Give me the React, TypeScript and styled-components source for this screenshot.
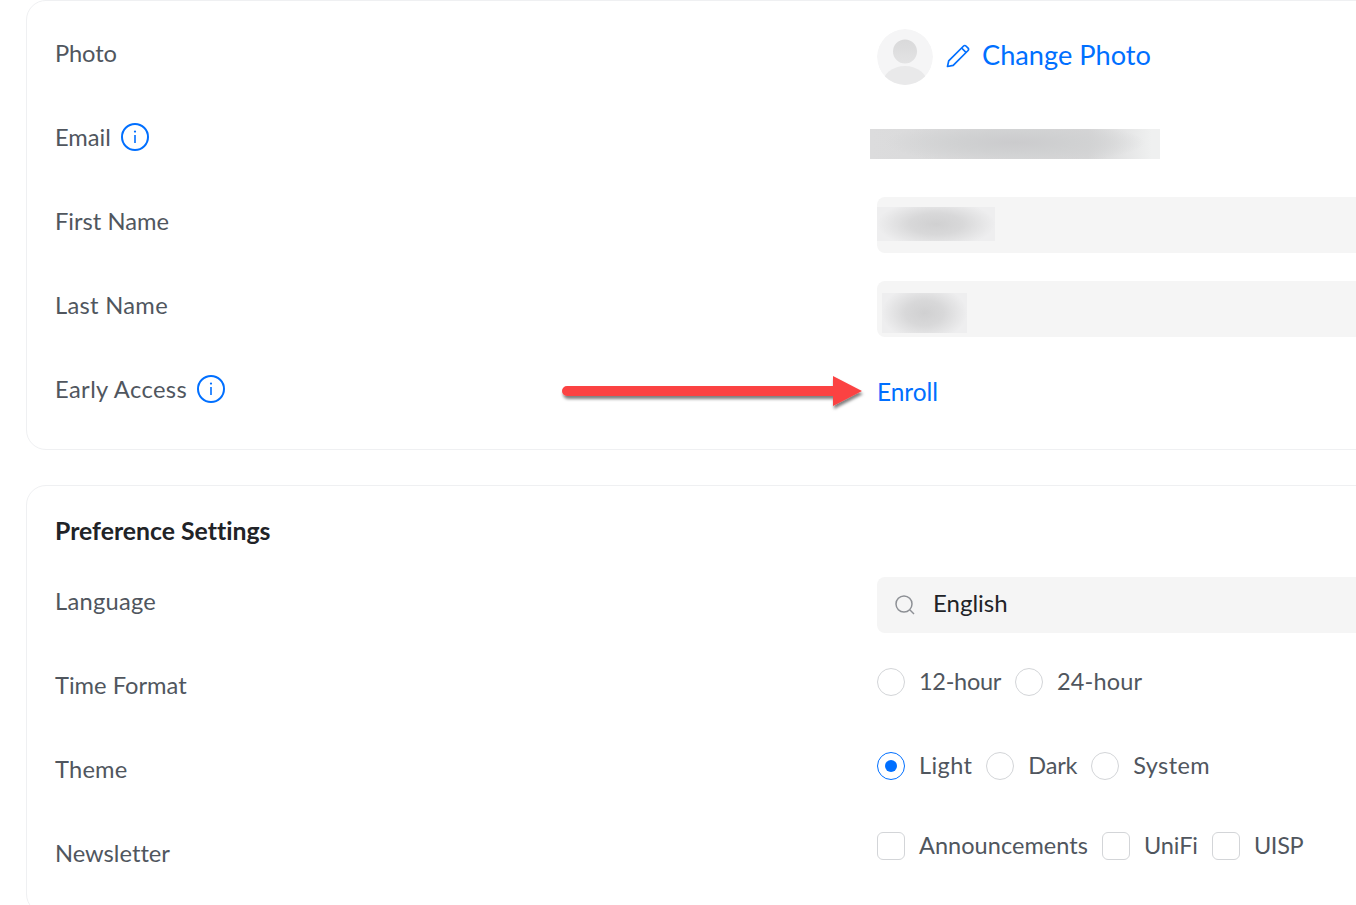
import React from "react";
import styled, { createGlobalStyle } from "styled-components";

const Global = createGlobalStyle`
  html, body { margin: 0; padding: 0; background: #fff; overflow: hidden; height: 905px; }
  * { box-sizing: border-box; }
`;

const Page = styled.div`
  position: relative;
  width: 1356px;
  height: 905px;
  overflow: hidden;
  padding-left: 26px;
  font-family: "Lato", "Liberation Sans", sans-serif;
  font-size: 23.7px;
  font-variant-ligatures: none;
  color: #50565e;
`;

const Card = styled.section<{ $second?: boolean }>`
  width: 1500px;
  border: 1px solid #eff0f2;
  border-radius: 20px;
  padding: 28px;
  margin-top: ${(p) => (p.$second ? "35px" : "0")};
  display: flex;
  flex-direction: column;
  gap: 28px;
`;

const Title = styled.h2`
  margin: 0;
  height: 35px;
  line-height: 33px;
  font-size: 24.8px;
  font-weight: 700;
  color: #212327;
`;

const Row = styled.div`
  display: grid;
  grid-template-columns: 822px 1fr;
  height: 56px;
`;

const Label = styled.div`
  display: flex;
  align-items: center;
  gap: 10px;
  height: 48px;
  line-height: 48px;
`;

const LabelText = styled.span<{ $track?: number }>`
  letter-spacing: ${(p) => p.$track ?? 0}px;
`;

const Control = styled.div`
  display: flex;
  align-items: flex-start;
  position: relative;
`;

const Avatar = styled.div`
  width: 56px;
  height: 56px;
  border-radius: 50%;
  overflow: hidden;
  flex: none;
`;

const LinkText = styled.span`
  color: #006fff;
  font-size: 27.2px;
  line-height: 34px;
`;

const PhotoLink = styled.div`
  display: flex;
  align-items: center;
  height: 52px;
  gap: 11px;
  margin-left: 13px;
`;

const EnrollLink = styled.div`
  color: #006fff;
  font-size: 24.4px;
  height: 54px;
  line-height: 54px;
`;

const Field = styled.div`
  position: relative;
  display: flex;
  align-items: center;
  width: 100%;
  height: 56px;
  border-radius: 8px;
  background: #f5f5f5;
  overflow: hidden;
`;

const SearchValue = styled.span`
  color: #212327;
  font-size: 24px;
  line-height: 52px;
  height: 56px;
  margin-left: 18px;
`;

const SearchIcon = styled.svg`
  margin-left: 18px;
  flex: none;
`;

const BlurEmail = styled.div`
  position: absolute;
  left: -7px;
  top: 16px;
  width: 290px;
  height: 30px;
  background:
    radial-gradient(ellipse 130px 22px at 50% 45%, #cbcbcd 0%, #d0d1d2 45%, rgba(214,215,216,0) 100%),
    linear-gradient(90deg, #dcdcdd 0%, #d6d6d7 75%, #eff0f0 97%);
`;

const BlurName = styled.div<{ $left: number; $top: number; $w: number; $h: number }>`
  position: absolute;
  left: ${(p) => p.$left}px;
  top: ${(p) => p.$top}px;
  width: ${(p) => p.$w}px;
  height: ${(p) => p.$h}px;
  background: radial-gradient(ellipse 50% 70% at 50% 50%, #d0d0d1 0%, #d8d8d9 45%, #eeeeef 100%);
`;

const Options = styled.div<{ $offset: number }>`
  display: flex;
  align-items: center;
  height: 28px;
  margin-top: ${(p) => p.$offset}px;
`;

const OptionLabel = styled.span<{ $track?: number }>`
  margin: 0 14px;
  font-size: 23.5px;
  line-height: 26px;
  height: 28px;
  white-space: nowrap;
  letter-spacing: ${(p) => p.$track ?? 0}px;
`;

const Radio = styled.span<{ $on?: boolean }>`
  width: 28px;
  height: 28px;
  border-radius: 50%;
  flex: none;
  display: flex;
  align-items: center;
  justify-content: center;
  border: 1px solid ${(p) => (p.$on ? "#006fff" : "#d3d5d8")};
  &::after {
    content: "";
    display: ${(p) => (p.$on ? "block" : "none")};
    width: 12px;
    height: 12px;
    border-radius: 50%;
    background: #006fff;
  }
`;

const Check = styled.span`
  width: 28px;
  height: 28px;
  border-radius: 6px;
  flex: none;
  border: 1px solid #d3d5d8;
`;

const ArrowOverlay = styled.svg`
  position: absolute;
  left: 550px;
  top: 365px;
  overflow: visible;
`;

const Info = () => (
  <svg width="28" height="28" viewBox="0 0 28 28" fill="none">
    <circle cx="14" cy="14" r="13" stroke="#006fff" strokeWidth="2" />
    <circle cx="14" cy="8.6" r="1.1" fill="#006fff" />
    <path d="M14 12v8" stroke="#006fff" strokeWidth="1.6" />
  </svg>
);

const Pencil = () => (
  <svg width="25" height="26" viewBox="0 0 25 26" fill="none" stroke="#006fff" strokeWidth="1.7" strokeLinejoin="round">
    <path d="M1.5 24.5l1.2-5.6L17.6 4a1.6 1.6 0 0 1 2.3 0l2.2 2.2a1.6 1.6 0 0 1 0 2.3L7.2 23.3z" />
    <path d="M15.6 6l4.6 4.6" />
  </svg>
);

export default function App() {
  return (
    <Page>
      <Global />
      <Card>
        <Row>
          <Label><LabelText $track={-0.15}>Photo</LabelText></Label>
          <Control>
            <Avatar>
              <svg width="56" height="56" viewBox="0 0 56 56">
                <defs>
                  <linearGradient id="head" x1="0" y1="0" x2="0" y2="1">
                    <stop offset="0" stopColor="#d9d9da" />
                    <stop offset="1" stopColor="#e3e3e4" />
                  </linearGradient>
                </defs>
                <circle cx="28" cy="28" r="28" fill="#f5f5f6" />
                <circle cx="28" cy="22.5" r="12" fill="url(#head)" />
                <ellipse cx="28" cy="56" rx="23" ry="19" fill="#e9e9ea" />
              </svg>
            </Avatar>
            <PhotoLink>
              <Pencil />
              <LinkText>Change Photo</LinkText>
            </PhotoLink>
          </Control>
        </Row>
        <Row>
          <Label><LabelText>Email</LabelText> <Info /></Label>
          <Control>
            <BlurEmail />
          </Control>
        </Row>
        <Row>
          <Label><LabelText>First Name</LabelText></Label>
          <Control>
            <Field>
              <BlurName $left={0} $top={10} $w={118} $h={34} />
            </Field>
          </Control>
        </Row>
        <Row>
          <Label><LabelText $track={0.3}>Last Name</LabelText></Label>
          <Control>
            <Field>
              <BlurName $left={5} $top={12} $w={85} $h={40} />
            </Field>
          </Control>
        </Row>
        <Row>
          <Label><LabelText $track={0.4}>Early Access</LabelText> <Info /></Label>
          <Control>
            <EnrollLink>Enroll</EnrollLink>
          </Control>
        </Row>
      </Card>
      <Card $second>
        <Title>Preference Settings</Title>
        <Row>
          <Label><LabelText $track={0.25}>Language</LabelText></Label>
          <Control>
            <Field>
              <SearchIcon width="20" height="20" viewBox="0 0 20 20" fill="none" stroke="#8d9095" strokeWidth="1.5">
                <circle cx="9" cy="9" r="8" />
                <path d="M15 15l4 4" />
              </SearchIcon>
              <SearchValue>English</SearchValue>
            </Field>
          </Control>
        </Row>
        <Row>
          <Label><LabelText>Time Format</LabelText></Label>
          <Control>
            <Options $offset={7}>
              <Radio /><OptionLabel $track={-0.3}>12-hour</OptionLabel>
              <Radio /><OptionLabel $track={0.15}>24-hour</OptionLabel>
            </Options>
          </Control>
        </Row>
        <Row>
          <Label><LabelText $track={0.2}>Theme</LabelText></Label>
          <Control>
            <Options $offset={7}>
              <Radio $on /><OptionLabel $track={0.4}>Light</OptionLabel>
              <Radio /><OptionLabel $track={-0.2}>Dark</OptionLabel>
              <Radio /><OptionLabel $track={0.4}>System</OptionLabel>
            </Options>
          </Control>
        </Row>
        <Row>
          <Label><LabelText>Newsletter</LabelText></Label>
          <Control>
            <Options $offset={3}>
              <Check /><OptionLabel $track={0.05}>Announcements</OptionLabel>
              <Check /><OptionLabel $track={-0.1}>UniFi</OptionLabel>
              <Check /><OptionLabel $track={-0.3}>UISP</OptionLabel>
            </Options>
          </Control>
        </Row>
      </Card>
      <ArrowOverlay width="320" height="60" viewBox="0 0 320 60">
        <defs>
          <filter id="sh" x="-5%" y="-50%" width="110%" height="200%">
            <feDropShadow dx="1" dy="3" stdDeviation="1.5" floodColor="#000" floodOpacity="0.5" />
          </filter>
        </defs>
        <path
          d="M17 21h266v-10l29 15-29 15v-10H17a5 5 0 0 1 0-10z"
          fill="#fb4343"
          filter="url(#sh)"
        />
      </ArrowOverlay>
    </Page>
  );
}
